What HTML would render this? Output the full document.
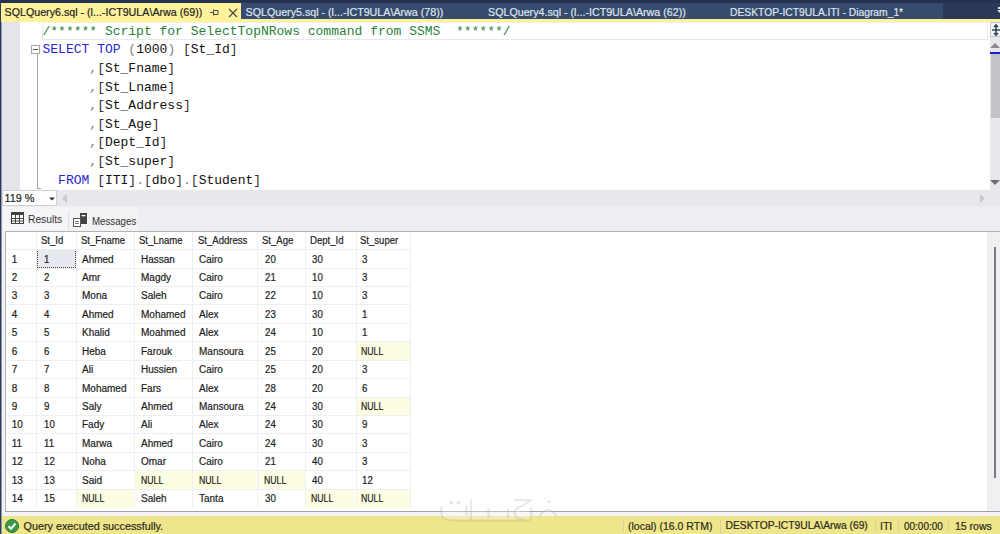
<!DOCTYPE html>
<html><head><meta charset="utf-8">
<style>
*{margin:0;padding:0;box-sizing:border-box}
html,body{width:1000px;height:534px;overflow:hidden;background:#fff;font-family:"Liberation Sans",sans-serif}
.a{position:absolute}
.t{position:absolute;white-space:pre;line-height:1em;transform-origin:0 0;-webkit-text-stroke:0.2px currentColor}
.code{position:absolute;font-family:"Liberation Mono",monospace;font-size:13px;white-space:pre;line-height:13px;color:#000}
.cm{color:#2a7f3a}.kw{color:#2626d0}.gr{color:#808080}.br{color:#303030}.n{color:#101010}
</style></head><body>
<div class="a" style="left:0px;top:0px;width:1000px;height:20px;background:#2a3958;"></div>
<div class="a" style="left:0px;top:0px;width:1000px;height:3px;background:#243250;"></div>
<div class="a" style="left:241px;top:3px;width:702px;height:17px;background:#374b6e;"></div>
<div class="a" style="left:998px;top:7px;width:2px;height:2px;background:#e8ecf4;"></div>
<svg class="a" style="left:997px;top:10px" width="3" height="3" viewBox="0 0 3 3"><path d="M0 0H6L3 3Z" fill="#e8ecf4"/></svg>
<div class="a" style="left:1px;top:3px;width:240px;height:17px;background:#fff29d;"></div>
<div class="a" style="left:0px;top:19px;width:1000px;height:3px;background:#fff29d;"></div>
<div class="t" style="left:4.50px;top:7.14px;font-size:10.7px;color:#1e1e1e;font-family:'Liberation Sans',sans-serif;">SQLQuery6.sql - (l...-ICT9ULA\Arwa (69))</div>
<div class="t" style="left:245.50px;top:7.14px;font-size:10.7px;color:#dfe5ef;font-family:'Liberation Sans',sans-serif;">SQLQuery5.sql - (l...-ICT9ULA\Arwa (78))</div>
<div class="t" style="left:488.00px;top:7.14px;font-size:10.7px;color:#dfe5ef;font-family:'Liberation Sans',sans-serif;">SQLQuery4.sql - (l...-ICT9ULA\Arwa (62))</div>
<div class="t" style="left:730.00px;top:7.14px;font-size:10.7px;color:#dfe5ef;font-family:'Liberation Sans',sans-serif;transform:scaleX(0.963);">DESKTOP-ICT9ULA.ITI - Diagram_1*</div>
<svg class="a" style="left:210px;top:9px" width="9" height="8" viewBox="0 0 9 8"><path d="M0 3.5H3.5M3.5 0.5V6.5M3.5 1.5H8V5.5H3.5" fill="none" stroke="#4a4a40" stroke-width="1"/></svg>
<svg class="a" style="left:227.5px;top:8px" width="10" height="10" viewBox="0 0 10 10"><path d="M1 1L9 9M9 1L1 9" stroke="#4a4a40" stroke-width="1.15"/></svg>
<div class="a" style="left:2px;top:22px;width:988px;height:168px;background:#ffffff;"></div>
<div class="a" style="left:2px;top:22px;width:17.5px;height:168px;background:#e5e4ea;"></div>
<div class="a" style="left:42px;top:22px;width:946px;height:18px;background:transparent;border:1px solid #e8e8ee;border-top-color:#f4f1e0;"></div>
<div class="a" style="left:31px;top:45px;width:9px;height:9px;background:#fff;border:1px solid #a5a5a5;"></div>
<div class="a" style="left:33px;top:49px;width:5px;height:1px;background:#555;"></div>
<div class="a" style="left:37px;top:54px;width:1px;height:135px;background:#a5a5a5;"></div>
<div class="a" style="left:37px;top:188px;width:4px;height:1px;background:#a5a5a5;"></div>
<div class="code" style="left:42.5px;top:24.94px"><span class="cm">/****** Script for SelectTopNRows command from SSMS  ******/</span></div>
<div class="code" style="left:42.5px;top:43.34px"><span class="kw">SELECT</span><span class="n"> </span><span class="kw">TOP</span><span class="n"> </span><span class="gr">(</span><span class="n">1000</span><span class="gr">)</span><span class="n"> </span><span class="br">[</span><span class="n">St_Id</span><span class="br">]</span></div>
<div class="code" style="left:42.5px;top:61.94px"><span class="n">      </span><span class="gr">,</span><span class="br">[</span><span class="n">St_Fname</span><span class="br">]</span></div>
<div class="code" style="left:42.5px;top:80.54px"><span class="n">      </span><span class="gr">,</span><span class="br">[</span><span class="n">St_Lname</span><span class="br">]</span></div>
<div class="code" style="left:42.5px;top:99.14px"><span class="n">      </span><span class="gr">,</span><span class="br">[</span><span class="n">St_Address</span><span class="br">]</span></div>
<div class="code" style="left:42.5px;top:117.74px"><span class="n">      </span><span class="gr">,</span><span class="br">[</span><span class="n">St_Age</span><span class="br">]</span></div>
<div class="code" style="left:42.5px;top:136.34px"><span class="n">      </span><span class="gr">,</span><span class="br">[</span><span class="n">Dept_Id</span><span class="br">]</span></div>
<div class="code" style="left:42.5px;top:154.94px"><span class="n">      </span><span class="gr">,</span><span class="br">[</span><span class="n">St_super</span><span class="br">]</span></div>
<div class="code" style="left:42.5px;top:173.54px"><span class="n">  </span><span class="kw">FROM</span><span class="n"> </span><span class="br">[</span><span class="n">ITI</span><span class="br">]</span><span class="gr">.</span><span class="br">[</span><span class="n">dbo</span><span class="br">]</span><span class="gr">.</span><span class="br">[</span><span class="n">Student</span><span class="br">]</span></div>
<div class="a" style="left:990px;top:22px;width:10px;height:168px;background:#e8e8ec;"></div>
<div class="a" style="left:990px;top:22px;width:10px;height:15px;background:#f5f5f7;border:1px solid #c5c5cc;border-right:none;"></div>
<svg class="a" style="left:991px;top:23px" width="9" height="14" viewBox="0 0 9 14"><path d="M1 7H9M5 2V12M3 4L5 2L7 4M3 10L5 12L7 10" fill="none" stroke="#2d4a5e" stroke-width="1.6"/></svg>
<svg class="a" style="left:990px;top:42px" width="10" height="7" viewBox="0 0 10 7"><path d="M5 1L10 6H0Z" fill="#8a8a8e"/></svg>
<div class="a" style="left:990px;top:52px;width:10px;height:2px;background:#1c1ccc;"></div>
<div class="a" style="left:991px;top:54px;width:9px;height:64px;background:#c2c3c9;"></div>
<svg class="a" style="left:990px;top:179px" width="10" height="7" viewBox="0 0 10 7"><path d="M0 1H10L5 6Z" fill="#6e6e72"/></svg>
<div class="a" style="left:2px;top:190px;width:998px;height:16px;background:#e8e8ec;"></div>
<div class="a" style="left:2px;top:190px;width:55px;height:16px;background:#ffffff;border:1px solid #d0d0d6;"></div>
<div class="t" style="left:4.50px;top:192.86px;font-size:10.8px;color:#1e1e1e;font-family:'Liberation Sans',sans-serif;">119 %</div>
<svg class="a" style="left:49px;top:197px" width="6" height="4" viewBox="0 0 6 4"><path d="M0 0.5H6L3 3.5Z" fill="#333"/></svg>
<svg class="a" style="left:62px;top:194px" width="6" height="9" viewBox="0 0 6 9"><path d="M5 0L0 4.5L5 9Z" fill="#c8c8cc"/></svg>
<svg class="a" style="left:980px;top:194px" width="6" height="9" viewBox="0 0 6 9"><path d="M0 0L5 4.5L0 9Z" fill="#c8c8cc"/></svg>
<div class="a" style="left:2px;top:206px;width:998px;height:25px;background:#eeeef2;"></div>
<div class="a" style="left:3px;top:207px;width:65px;height:24px;background:#f5f5f7;"></div>
<div class="a" style="left:68px;top:207px;width:70px;height:24px;background:#f2f2f4;"></div>
<div class="a" style="left:68px;top:212px;width:1px;height:18px;background:#dedee4;"></div>
<div class="t" style="left:28.00px;top:213.86px;font-size:10.8px;color:#333333;font-family:'Liberation Sans',sans-serif;transform:scaleX(0.95);-webkit-text-stroke:0;">Results</div>
<div class="t" style="left:92.00px;top:215.86px;font-size:10.8px;color:#333333;font-family:'Liberation Sans',sans-serif;transform:scaleX(0.9);-webkit-text-stroke:0;">Messages</div>
<svg class="a" style="left:11px;top:212px" width="13" height="12" viewBox="0 0 13 12"><rect x="0.5" y="0.5" width="12" height="11" fill="#fff" stroke="#424242"/><rect x="0" y="0" width="13" height="3" fill="#424242"/><path d="M0 6.5H13M0 9H13M4.5 3V12M8.5 3V12" stroke="#424242" stroke-width="1"/></svg>
<svg class="a" style="left:73px;top:213px" width="15" height="14" viewBox="0 0 15 14"><rect x="7.5" y="0.5" width="6" height="10" fill="#424242" stroke="#424242"/><rect x="8.5" y="2" width="4" height="1.3" fill="#fff"/><rect x="0.5" y="5.5" width="7" height="8" fill="#fff" stroke="#555"/><path d="M2 8.5H6M2 10.5H6" stroke="#777"/></svg>
<div class="a" style="left:2px;top:231px;width:4px;height:281px;background:#f2f2f5;"></div>
<div class="a" style="left:5px;top:231px;width:995px;height:281px;background:#ffffff;border:1px solid #b4b4b8;border-right:none;"></div>
<div class="a" style="left:987px;top:232px;width:13px;height:279px;background:#f0f0f3;"></div>
<div class="a" style="left:994px;top:247px;width:2px;height:231px;background:#7a7a7e;"></div>
<div class="a" style="left:356px;top:342px;width:54px;height:18px;background:#fdfde4;"></div>
<div class="a" style="left:356px;top:397px;width:54px;height:18px;background:#fdfde4;"></div>
<div class="a" style="left:134px;top:471px;width:58px;height:18px;background:#fdfde4;"></div>
<div class="a" style="left:192px;top:471px;width:64px;height:18px;background:#fdfde4;"></div>
<div class="a" style="left:257px;top:471px;width:48px;height:18px;background:#fdfde4;"></div>
<div class="a" style="left:76px;top:489px;width:57px;height:19px;background:#fdfde4;"></div>
<div class="a" style="left:305px;top:489px;width:50px;height:19px;background:#fdfde4;"></div>
<div class="a" style="left:356px;top:489px;width:54px;height:19px;background:#fdfde4;"></div>
<div class="a" style="left:37px;top:249px;width:39px;height:19px;background:#e6e9f0;border:1px dotted #444;"></div>
<div class="a" style="left:6px;top:249px;width:404px;height:1px;background:#efeef2;"></div>
<div class="a" style="left:6px;top:268px;width:404px;height:1px;background:#efeef2;"></div>
<div class="a" style="left:6px;top:286px;width:404px;height:1px;background:#efeef2;"></div>
<div class="a" style="left:6px;top:304px;width:404px;height:1px;background:#efeef2;"></div>
<div class="a" style="left:6px;top:323px;width:404px;height:1px;background:#efeef2;"></div>
<div class="a" style="left:6px;top:341px;width:404px;height:1px;background:#efeef2;"></div>
<div class="a" style="left:6px;top:360px;width:404px;height:1px;background:#efeef2;"></div>
<div class="a" style="left:6px;top:378px;width:404px;height:1px;background:#efeef2;"></div>
<div class="a" style="left:6px;top:397px;width:404px;height:1px;background:#efeef2;"></div>
<div class="a" style="left:6px;top:415px;width:404px;height:1px;background:#efeef2;"></div>
<div class="a" style="left:6px;top:433px;width:404px;height:1px;background:#efeef2;"></div>
<div class="a" style="left:6px;top:452px;width:404px;height:1px;background:#efeef2;"></div>
<div class="a" style="left:6px;top:470px;width:404px;height:1px;background:#efeef2;"></div>
<div class="a" style="left:6px;top:489px;width:404px;height:1px;background:#efeef2;"></div>
<div class="a" style="left:36px;top:232px;width:1px;height:276px;background:#efeef2;"></div>
<div class="a" style="left:76px;top:232px;width:1px;height:276px;background:#efeef2;"></div>
<div class="a" style="left:134px;top:232px;width:1px;height:276px;background:#efeef2;"></div>
<div class="a" style="left:192px;top:232px;width:1px;height:276px;background:#efeef2;"></div>
<div class="a" style="left:257px;top:232px;width:1px;height:276px;background:#efeef2;"></div>
<div class="a" style="left:305px;top:232px;width:1px;height:276px;background:#efeef2;"></div>
<div class="a" style="left:356px;top:232px;width:1px;height:276px;background:#efeef2;"></div>
<div class="a" style="left:410px;top:232px;width:1px;height:276px;background:#efeef2;"></div>
<div class="t" style="left:40.50px;top:236.34px;font-size:10px;color:#1e1e1e;font-family:'Liberation Sans',sans-serif;transform:scaleX(0.955);">St_Id</div>
<div class="t" style="left:80.90px;top:236.34px;font-size:10px;color:#1e1e1e;font-family:'Liberation Sans',sans-serif;transform:scaleX(0.955);">St_Fname</div>
<div class="t" style="left:139.00px;top:236.34px;font-size:10px;color:#1e1e1e;font-family:'Liberation Sans',sans-serif;transform:scaleX(0.955);">St_Lname</div>
<div class="t" style="left:197.50px;top:236.34px;font-size:10px;color:#1e1e1e;font-family:'Liberation Sans',sans-serif;transform:scaleX(0.955);">St_Address</div>
<div class="t" style="left:262.20px;top:236.34px;font-size:10px;color:#1e1e1e;font-family:'Liberation Sans',sans-serif;transform:scaleX(0.955);">St_Age</div>
<div class="t" style="left:309.50px;top:236.34px;font-size:10px;color:#1e1e1e;font-family:'Liberation Sans',sans-serif;transform:scaleX(0.955);">Dept_Id</div>
<div class="t" style="left:360.00px;top:236.34px;font-size:10px;color:#1e1e1e;font-family:'Liberation Sans',sans-serif;transform:scaleX(0.955);">St_super</div>
<div class="t" style="left:11.80px;top:254.53px;font-size:10px;color:#1e1e1e;font-family:'Liberation Sans',sans-serif;">1</div>
<div class="t" style="left:44.20px;top:254.53px;font-size:10px;color:#1e1e1e;font-family:'Liberation Sans',sans-serif;transform:scaleX(0.97);">1</div>
<div class="t" style="left:82.00px;top:254.53px;font-size:10px;color:#1e1e1e;font-family:'Liberation Sans',sans-serif;">Ahmed</div>
<div class="t" style="left:141.00px;top:254.53px;font-size:10px;color:#1e1e1e;font-family:'Liberation Sans',sans-serif;">Hassan</div>
<div class="t" style="left:199.00px;top:254.53px;font-size:10px;color:#1e1e1e;font-family:'Liberation Sans',sans-serif;">Cairo</div>
<div class="t" style="left:264.90px;top:254.53px;font-size:10px;color:#1e1e1e;font-family:'Liberation Sans',sans-serif;transform:scaleX(0.97);">20</div>
<div class="t" style="left:312.10px;top:254.53px;font-size:10px;color:#1e1e1e;font-family:'Liberation Sans',sans-serif;transform:scaleX(0.97);">30</div>
<div class="t" style="left:362.40px;top:254.53px;font-size:10px;color:#1e1e1e;font-family:'Liberation Sans',sans-serif;transform:scaleX(0.97);">3</div>
<div class="t" style="left:11.80px;top:272.96px;font-size:10px;color:#1e1e1e;font-family:'Liberation Sans',sans-serif;">2</div>
<div class="t" style="left:44.20px;top:272.96px;font-size:10px;color:#1e1e1e;font-family:'Liberation Sans',sans-serif;transform:scaleX(0.97);">2</div>
<div class="t" style="left:82.00px;top:272.96px;font-size:10px;color:#1e1e1e;font-family:'Liberation Sans',sans-serif;">Amr</div>
<div class="t" style="left:141.00px;top:272.96px;font-size:10px;color:#1e1e1e;font-family:'Liberation Sans',sans-serif;">Magdy</div>
<div class="t" style="left:199.00px;top:272.96px;font-size:10px;color:#1e1e1e;font-family:'Liberation Sans',sans-serif;">Cairo</div>
<div class="t" style="left:264.90px;top:272.96px;font-size:10px;color:#1e1e1e;font-family:'Liberation Sans',sans-serif;transform:scaleX(0.97);">21</div>
<div class="t" style="left:312.10px;top:272.96px;font-size:10px;color:#1e1e1e;font-family:'Liberation Sans',sans-serif;transform:scaleX(0.97);">10</div>
<div class="t" style="left:362.40px;top:272.96px;font-size:10px;color:#1e1e1e;font-family:'Liberation Sans',sans-serif;transform:scaleX(0.97);">3</div>
<div class="t" style="left:11.80px;top:291.39px;font-size:10px;color:#1e1e1e;font-family:'Liberation Sans',sans-serif;">3</div>
<div class="t" style="left:44.20px;top:291.39px;font-size:10px;color:#1e1e1e;font-family:'Liberation Sans',sans-serif;transform:scaleX(0.97);">3</div>
<div class="t" style="left:82.00px;top:291.39px;font-size:10px;color:#1e1e1e;font-family:'Liberation Sans',sans-serif;">Mona</div>
<div class="t" style="left:141.00px;top:291.39px;font-size:10px;color:#1e1e1e;font-family:'Liberation Sans',sans-serif;">Saleh</div>
<div class="t" style="left:199.00px;top:291.39px;font-size:10px;color:#1e1e1e;font-family:'Liberation Sans',sans-serif;">Cairo</div>
<div class="t" style="left:264.90px;top:291.39px;font-size:10px;color:#1e1e1e;font-family:'Liberation Sans',sans-serif;transform:scaleX(0.97);">22</div>
<div class="t" style="left:312.10px;top:291.39px;font-size:10px;color:#1e1e1e;font-family:'Liberation Sans',sans-serif;transform:scaleX(0.97);">10</div>
<div class="t" style="left:362.40px;top:291.39px;font-size:10px;color:#1e1e1e;font-family:'Liberation Sans',sans-serif;transform:scaleX(0.97);">3</div>
<div class="t" style="left:11.80px;top:309.82px;font-size:10px;color:#1e1e1e;font-family:'Liberation Sans',sans-serif;">4</div>
<div class="t" style="left:44.20px;top:309.82px;font-size:10px;color:#1e1e1e;font-family:'Liberation Sans',sans-serif;transform:scaleX(0.97);">4</div>
<div class="t" style="left:82.00px;top:309.82px;font-size:10px;color:#1e1e1e;font-family:'Liberation Sans',sans-serif;">Ahmed</div>
<div class="t" style="left:141.00px;top:309.82px;font-size:10px;color:#1e1e1e;font-family:'Liberation Sans',sans-serif;">Mohamed</div>
<div class="t" style="left:199.00px;top:309.82px;font-size:10px;color:#1e1e1e;font-family:'Liberation Sans',sans-serif;">Alex</div>
<div class="t" style="left:264.90px;top:309.82px;font-size:10px;color:#1e1e1e;font-family:'Liberation Sans',sans-serif;transform:scaleX(0.97);">23</div>
<div class="t" style="left:312.10px;top:309.82px;font-size:10px;color:#1e1e1e;font-family:'Liberation Sans',sans-serif;transform:scaleX(0.97);">30</div>
<div class="t" style="left:362.40px;top:309.82px;font-size:10px;color:#1e1e1e;font-family:'Liberation Sans',sans-serif;transform:scaleX(0.97);">1</div>
<div class="t" style="left:11.80px;top:328.25px;font-size:10px;color:#1e1e1e;font-family:'Liberation Sans',sans-serif;">5</div>
<div class="t" style="left:44.20px;top:328.25px;font-size:10px;color:#1e1e1e;font-family:'Liberation Sans',sans-serif;transform:scaleX(0.97);">5</div>
<div class="t" style="left:82.00px;top:328.25px;font-size:10px;color:#1e1e1e;font-family:'Liberation Sans',sans-serif;">Khalid</div>
<div class="t" style="left:141.00px;top:328.25px;font-size:10px;color:#1e1e1e;font-family:'Liberation Sans',sans-serif;">Moahmed</div>
<div class="t" style="left:199.00px;top:328.25px;font-size:10px;color:#1e1e1e;font-family:'Liberation Sans',sans-serif;">Alex</div>
<div class="t" style="left:264.90px;top:328.25px;font-size:10px;color:#1e1e1e;font-family:'Liberation Sans',sans-serif;transform:scaleX(0.97);">24</div>
<div class="t" style="left:312.10px;top:328.25px;font-size:10px;color:#1e1e1e;font-family:'Liberation Sans',sans-serif;transform:scaleX(0.97);">10</div>
<div class="t" style="left:362.40px;top:328.25px;font-size:10px;color:#1e1e1e;font-family:'Liberation Sans',sans-serif;transform:scaleX(0.97);">1</div>
<div class="t" style="left:11.80px;top:346.69px;font-size:10px;color:#1e1e1e;font-family:'Liberation Sans',sans-serif;">6</div>
<div class="t" style="left:44.20px;top:346.69px;font-size:10px;color:#1e1e1e;font-family:'Liberation Sans',sans-serif;transform:scaleX(0.97);">6</div>
<div class="t" style="left:82.00px;top:346.69px;font-size:10px;color:#1e1e1e;font-family:'Liberation Sans',sans-serif;">Heba</div>
<div class="t" style="left:141.00px;top:346.69px;font-size:10px;color:#1e1e1e;font-family:'Liberation Sans',sans-serif;">Farouk</div>
<div class="t" style="left:199.00px;top:346.69px;font-size:10px;color:#1e1e1e;font-family:'Liberation Sans',sans-serif;">Mansoura</div>
<div class="t" style="left:264.90px;top:346.69px;font-size:10px;color:#1e1e1e;font-family:'Liberation Sans',sans-serif;transform:scaleX(0.97);">25</div>
<div class="t" style="left:312.10px;top:346.69px;font-size:10px;color:#1e1e1e;font-family:'Liberation Sans',sans-serif;transform:scaleX(0.97);">20</div>
<div class="t" style="left:361.30px;top:346.69px;font-size:10px;color:#1e1e1e;font-family:'Liberation Sans',sans-serif;transform:scaleX(0.87);">NULL</div>
<div class="t" style="left:11.80px;top:365.12px;font-size:10px;color:#1e1e1e;font-family:'Liberation Sans',sans-serif;">7</div>
<div class="t" style="left:44.20px;top:365.12px;font-size:10px;color:#1e1e1e;font-family:'Liberation Sans',sans-serif;transform:scaleX(0.97);">7</div>
<div class="t" style="left:82.00px;top:365.12px;font-size:10px;color:#1e1e1e;font-family:'Liberation Sans',sans-serif;">Ali</div>
<div class="t" style="left:141.00px;top:365.12px;font-size:10px;color:#1e1e1e;font-family:'Liberation Sans',sans-serif;">Hussien</div>
<div class="t" style="left:199.00px;top:365.12px;font-size:10px;color:#1e1e1e;font-family:'Liberation Sans',sans-serif;">Cairo</div>
<div class="t" style="left:264.90px;top:365.12px;font-size:10px;color:#1e1e1e;font-family:'Liberation Sans',sans-serif;transform:scaleX(0.97);">25</div>
<div class="t" style="left:312.10px;top:365.12px;font-size:10px;color:#1e1e1e;font-family:'Liberation Sans',sans-serif;transform:scaleX(0.97);">20</div>
<div class="t" style="left:362.40px;top:365.12px;font-size:10px;color:#1e1e1e;font-family:'Liberation Sans',sans-serif;transform:scaleX(0.97);">3</div>
<div class="t" style="left:11.80px;top:383.55px;font-size:10px;color:#1e1e1e;font-family:'Liberation Sans',sans-serif;">8</div>
<div class="t" style="left:44.20px;top:383.55px;font-size:10px;color:#1e1e1e;font-family:'Liberation Sans',sans-serif;transform:scaleX(0.97);">8</div>
<div class="t" style="left:82.00px;top:383.55px;font-size:10px;color:#1e1e1e;font-family:'Liberation Sans',sans-serif;">Mohamed</div>
<div class="t" style="left:141.00px;top:383.55px;font-size:10px;color:#1e1e1e;font-family:'Liberation Sans',sans-serif;">Fars</div>
<div class="t" style="left:199.00px;top:383.55px;font-size:10px;color:#1e1e1e;font-family:'Liberation Sans',sans-serif;">Alex</div>
<div class="t" style="left:264.90px;top:383.55px;font-size:10px;color:#1e1e1e;font-family:'Liberation Sans',sans-serif;transform:scaleX(0.97);">28</div>
<div class="t" style="left:312.10px;top:383.55px;font-size:10px;color:#1e1e1e;font-family:'Liberation Sans',sans-serif;transform:scaleX(0.97);">20</div>
<div class="t" style="left:362.40px;top:383.55px;font-size:10px;color:#1e1e1e;font-family:'Liberation Sans',sans-serif;transform:scaleX(0.97);">6</div>
<div class="t" style="left:11.80px;top:401.97px;font-size:10px;color:#1e1e1e;font-family:'Liberation Sans',sans-serif;">9</div>
<div class="t" style="left:44.20px;top:401.97px;font-size:10px;color:#1e1e1e;font-family:'Liberation Sans',sans-serif;transform:scaleX(0.97);">9</div>
<div class="t" style="left:82.00px;top:401.97px;font-size:10px;color:#1e1e1e;font-family:'Liberation Sans',sans-serif;">Saly</div>
<div class="t" style="left:141.00px;top:401.97px;font-size:10px;color:#1e1e1e;font-family:'Liberation Sans',sans-serif;">Ahmed</div>
<div class="t" style="left:199.00px;top:401.97px;font-size:10px;color:#1e1e1e;font-family:'Liberation Sans',sans-serif;">Mansoura</div>
<div class="t" style="left:264.90px;top:401.97px;font-size:10px;color:#1e1e1e;font-family:'Liberation Sans',sans-serif;transform:scaleX(0.97);">24</div>
<div class="t" style="left:312.10px;top:401.97px;font-size:10px;color:#1e1e1e;font-family:'Liberation Sans',sans-serif;transform:scaleX(0.97);">30</div>
<div class="t" style="left:361.30px;top:401.97px;font-size:10px;color:#1e1e1e;font-family:'Liberation Sans',sans-serif;transform:scaleX(0.87);">NULL</div>
<div class="t" style="left:11.80px;top:420.41px;font-size:10px;color:#1e1e1e;font-family:'Liberation Sans',sans-serif;">10</div>
<div class="t" style="left:44.20px;top:420.41px;font-size:10px;color:#1e1e1e;font-family:'Liberation Sans',sans-serif;transform:scaleX(0.97);">10</div>
<div class="t" style="left:82.00px;top:420.41px;font-size:10px;color:#1e1e1e;font-family:'Liberation Sans',sans-serif;">Fady</div>
<div class="t" style="left:141.00px;top:420.41px;font-size:10px;color:#1e1e1e;font-family:'Liberation Sans',sans-serif;">Ali</div>
<div class="t" style="left:199.00px;top:420.41px;font-size:10px;color:#1e1e1e;font-family:'Liberation Sans',sans-serif;">Alex</div>
<div class="t" style="left:264.90px;top:420.41px;font-size:10px;color:#1e1e1e;font-family:'Liberation Sans',sans-serif;transform:scaleX(0.97);">24</div>
<div class="t" style="left:312.10px;top:420.41px;font-size:10px;color:#1e1e1e;font-family:'Liberation Sans',sans-serif;transform:scaleX(0.97);">30</div>
<div class="t" style="left:362.40px;top:420.41px;font-size:10px;color:#1e1e1e;font-family:'Liberation Sans',sans-serif;transform:scaleX(0.97);">9</div>
<div class="t" style="left:11.80px;top:438.83px;font-size:10px;color:#1e1e1e;font-family:'Liberation Sans',sans-serif;">11</div>
<div class="t" style="left:44.20px;top:438.83px;font-size:10px;color:#1e1e1e;font-family:'Liberation Sans',sans-serif;transform:scaleX(0.97);">11</div>
<div class="t" style="left:82.00px;top:438.83px;font-size:10px;color:#1e1e1e;font-family:'Liberation Sans',sans-serif;">Marwa</div>
<div class="t" style="left:141.00px;top:438.83px;font-size:10px;color:#1e1e1e;font-family:'Liberation Sans',sans-serif;">Ahmed</div>
<div class="t" style="left:199.00px;top:438.83px;font-size:10px;color:#1e1e1e;font-family:'Liberation Sans',sans-serif;">Cairo</div>
<div class="t" style="left:264.90px;top:438.83px;font-size:10px;color:#1e1e1e;font-family:'Liberation Sans',sans-serif;transform:scaleX(0.97);">24</div>
<div class="t" style="left:312.10px;top:438.83px;font-size:10px;color:#1e1e1e;font-family:'Liberation Sans',sans-serif;transform:scaleX(0.97);">30</div>
<div class="t" style="left:362.40px;top:438.83px;font-size:10px;color:#1e1e1e;font-family:'Liberation Sans',sans-serif;transform:scaleX(0.97);">3</div>
<div class="t" style="left:11.80px;top:457.26px;font-size:10px;color:#1e1e1e;font-family:'Liberation Sans',sans-serif;">12</div>
<div class="t" style="left:44.20px;top:457.26px;font-size:10px;color:#1e1e1e;font-family:'Liberation Sans',sans-serif;transform:scaleX(0.97);">12</div>
<div class="t" style="left:82.00px;top:457.26px;font-size:10px;color:#1e1e1e;font-family:'Liberation Sans',sans-serif;">Noha</div>
<div class="t" style="left:141.00px;top:457.26px;font-size:10px;color:#1e1e1e;font-family:'Liberation Sans',sans-serif;">Omar</div>
<div class="t" style="left:199.00px;top:457.26px;font-size:10px;color:#1e1e1e;font-family:'Liberation Sans',sans-serif;">Cairo</div>
<div class="t" style="left:264.90px;top:457.26px;font-size:10px;color:#1e1e1e;font-family:'Liberation Sans',sans-serif;transform:scaleX(0.97);">21</div>
<div class="t" style="left:312.10px;top:457.26px;font-size:10px;color:#1e1e1e;font-family:'Liberation Sans',sans-serif;transform:scaleX(0.97);">40</div>
<div class="t" style="left:362.40px;top:457.26px;font-size:10px;color:#1e1e1e;font-family:'Liberation Sans',sans-serif;transform:scaleX(0.97);">3</div>
<div class="t" style="left:11.80px;top:475.69px;font-size:10px;color:#1e1e1e;font-family:'Liberation Sans',sans-serif;">13</div>
<div class="t" style="left:44.20px;top:475.69px;font-size:10px;color:#1e1e1e;font-family:'Liberation Sans',sans-serif;transform:scaleX(0.97);">13</div>
<div class="t" style="left:82.00px;top:475.69px;font-size:10px;color:#1e1e1e;font-family:'Liberation Sans',sans-serif;">Said</div>
<div class="t" style="left:140.50px;top:475.69px;font-size:10px;color:#1e1e1e;font-family:'Liberation Sans',sans-serif;transform:scaleX(0.87);">NULL</div>
<div class="t" style="left:198.50px;top:475.69px;font-size:10px;color:#1e1e1e;font-family:'Liberation Sans',sans-serif;transform:scaleX(0.87);">NULL</div>
<div class="t" style="left:263.80px;top:475.69px;font-size:10px;color:#1e1e1e;font-family:'Liberation Sans',sans-serif;transform:scaleX(0.87);">NULL</div>
<div class="t" style="left:312.10px;top:475.69px;font-size:10px;color:#1e1e1e;font-family:'Liberation Sans',sans-serif;transform:scaleX(0.97);">40</div>
<div class="t" style="left:362.40px;top:475.69px;font-size:10px;color:#1e1e1e;font-family:'Liberation Sans',sans-serif;transform:scaleX(0.97);">12</div>
<div class="t" style="left:11.80px;top:494.12px;font-size:10px;color:#1e1e1e;font-family:'Liberation Sans',sans-serif;">14</div>
<div class="t" style="left:44.20px;top:494.12px;font-size:10px;color:#1e1e1e;font-family:'Liberation Sans',sans-serif;transform:scaleX(0.97);">15</div>
<div class="t" style="left:81.50px;top:494.12px;font-size:10px;color:#1e1e1e;font-family:'Liberation Sans',sans-serif;transform:scaleX(0.87);">NULL</div>
<div class="t" style="left:141.00px;top:494.12px;font-size:10px;color:#1e1e1e;font-family:'Liberation Sans',sans-serif;">Saleh</div>
<div class="t" style="left:199.00px;top:494.12px;font-size:10px;color:#1e1e1e;font-family:'Liberation Sans',sans-serif;">Tanta</div>
<div class="t" style="left:264.90px;top:494.12px;font-size:10px;color:#1e1e1e;font-family:'Liberation Sans',sans-serif;transform:scaleX(0.97);">30</div>
<div class="t" style="left:311.00px;top:494.12px;font-size:10px;color:#1e1e1e;font-family:'Liberation Sans',sans-serif;transform:scaleX(0.87);">NULL</div>
<div class="t" style="left:361.30px;top:494.12px;font-size:10px;color:#1e1e1e;font-family:'Liberation Sans',sans-serif;transform:scaleX(0.87);">NULL</div>
<div class="a" style="left:2px;top:511px;width:998px;height:5px;background:#f4f4f6;"></div>
<div class="a" style="left:5px;top:511px;width:995px;height:1px;background:#a0a0a4;"></div>
<div class="a" style="left:0px;top:516px;width:1000px;height:18px;background:#efe58a;"></div>
<svg class="a" style="left:5px;top:519px" width="14" height="14" viewBox="0 0 14 14"><circle cx="7" cy="7" r="6.5" fill="#3a9a48" stroke="#2a7a36"/><path d="M3.5 7.2L6 9.8L10.5 4.5" fill="none" stroke="#fff" stroke-width="2"/></svg>
<div class="t" style="left:23.50px;top:520.66px;font-size:10.8px;color:#2b2b1e;font-family:'Liberation Sans',sans-serif;">Query executed successfully.</div>
<div class="a" style="left:623px;top:519px;width:1px;height:14px;background:#d8d0a0;"></div>
<div class="a" style="left:720px;top:519px;width:1px;height:14px;background:#d8d0a0;"></div>
<div class="a" style="left:875px;top:519px;width:1px;height:14px;background:#d8d0a0;"></div>
<div class="a" style="left:898px;top:519px;width:1px;height:14px;background:#d8d0a0;"></div>
<div class="a" style="left:948px;top:519px;width:1px;height:14px;background:#d8d0a0;"></div>
<div class="t" style="left:628.00px;top:520.91px;font-size:10.5px;color:#2b2b1e;font-family:'Liberation Sans',sans-serif;">(local) (16.0 RTM)</div>
<div class="t" style="left:725.50px;top:521.08px;font-size:10.3px;color:#2b2b1e;font-family:'Liberation Sans',sans-serif;">DESKTOP-ICT9ULA\Arwa (69)</div>
<div class="t" style="left:880.00px;top:520.91px;font-size:10.5px;color:#2b2b1e;font-family:'Liberation Sans',sans-serif;">ITI</div>
<div class="t" style="left:904.00px;top:520.91px;font-size:10.5px;color:#2b2b1e;font-family:'Liberation Sans',sans-serif;transform:scaleX(0.95);">00:00:00</div>
<div class="t" style="left:955.00px;top:520.91px;font-size:10.5px;color:#2b2b1e;font-family:'Liberation Sans',sans-serif;">15 rows</div>
<svg class="a" style="left:430px;top:490px" width="135" height="40" viewBox="430 490 135 40"><g fill="rgba(255,255,255,0.28)" stroke="rgba(120,120,135,0.16)" stroke-width="2.2" stroke-linecap="round" stroke-linejoin="round"><path d="M441.5 507V514Q442 520 454 520.5H528Q531 520 531 516V508"/><path d="M466.5 506V515"/><path d="M471 500V519"/><path d="M488.5 509V517M508 509V517"/><path d="M515 500H531L522 506Q514 508 515 514Q516 519 523 519"/><path d="M540 516Q548 504 556 516"/></g><g fill="rgba(120,120,135,0.18)"><circle cx="451.5" cy="502.5" r="1.8"/><circle cx="458.5" cy="502.5" r="1.8"/><circle cx="549" cy="501.5" r="1.6"/></g></svg>
<div class="a" style="left:0px;top:0px;width:1px;height:534px;background:#2a3958;"></div>
<div class="a" style="left:1px;top:22px;width:1px;height:512px;background:#8e9ab0;"></div>
</body></html>
